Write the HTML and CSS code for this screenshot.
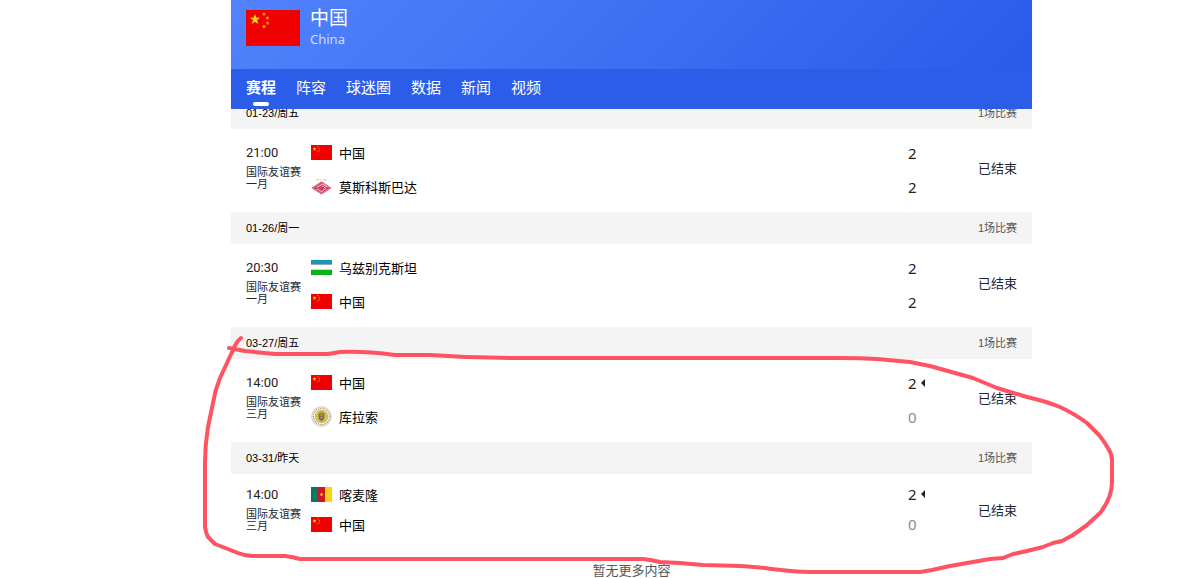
FILE: index.html
```html
<!DOCTYPE html>
<html lang="zh-CN">
<head>
    <meta charset="UTF-8">
    <meta name="viewport" content="width=device-width, initial-scale=1.0">
    <title>中国 - 赛程</title>
    <link rel="stylesheet" href="styles.css">
</head>
<body>
    <!-- shared flag and badge artwork -->
    <svg class="sprite" width="0" height="0" aria-hidden="true">
        <symbol id="flag-cn" viewBox="0 0 54 36" preserveAspectRatio="none">
            <rect width="54" height="36" fill="#f10000"/>
            <path d="M9 4l1.300 3.600 3.900.1-3.100 2.400 1.100 3.800L9 11.700l-3.200 2.200 1.100-3.800-3.100-2.400 3.900-.1z" fill="#ffd800"/>
            <path d="M18 2l.6 1.200 1.300.2-1 .9.300 1.400-1.200-.7-1.200.7.300-1.400-1-.9 1.300-.2z" fill="#f5b400"/>
            <path d="M21.500 6l.6 1.200 1.300.2-1 .9.300 1.400-1.200-.7-1.200.7.300-1.400-1-.9 1.300-.2z" fill="#f5b400"/>
            <path d="M21.500 11l.6 1.200 1.300.2-1 .9.300 1.400-1.200-.7-1.200.7.300-1.400-1-.9 1.300-.2z" fill="#f5b400"/>
            <path d="M18 14.500l.6 1.200 1.300.2-1 .9.300 1.400-1.200-.7-1.200.7.300-1.400-1-.9 1.300-.2z" fill="#f5b400"/>
        </symbol>
        <symbol id="flag-uz" viewBox="0 0 21 15" preserveAspectRatio="none">
            <rect width="21" height="15" fill="#fff"/>
            <rect width="21" height="4" fill="#159bb9"/>
            <rect y="4" width="21" height="1" fill="#8fa9b1"/>
            <rect y="9" width="21" height="1" fill="#b5e5b8"/>
            <rect y="10" width="21" height="5" fill="#08b312"/>
        </symbol>
        <symbol id="flag-cm" viewBox="0 0 21 14" preserveAspectRatio="none">
            <rect width="7" height="14" fill="#057a5e"/>
            <rect x="7" width="7" height="14" fill="#ce1529"/>
            <rect x="14" width="7" height="14" fill="#fcd116"/>
            <path d="M10.500 5l.6 1.400h1.400l-1.100.9.400 1.400-1.300-.8-1.300.8.400-1.400-1.100-.9h1.400z" fill="#fcc516"/>
        </symbol>
        <symbol id="badge-spartak" viewBox="0 0 22 22">
            <path d="M6 4h2M9 4h1M12 4h1M14 4h2" stroke="#d8ccae" stroke-width="1.500"/>
            <path d="M11 5.500L21.500 12.500 11 19.500.5 12.500z" fill="#d43f60"/>
            <path d="M2 12.500L11 6.500l9 6-9 6z" fill="none" stroke="#f0b7c3" stroke-width=".5"/>
            <path d="M6 12l6-3.500 5 3M6 14.500l5.500-4 4 2.500-4.500 3.500-3-2" fill="none" stroke="#fbe9ed" stroke-width=".9"/>
            <path d="M7 13l4-2 3 2" fill="none" stroke="#b71d3e"/>
        </symbol>
        <symbol id="badge-curacao" viewBox="0 0 22 22">
            <circle cx="11" cy="11" r="10.300" fill="#f6f5f7" stroke="#dfca8e"/>
            <circle cx="11" cy="11" r="8.500" fill="none" stroke="#8d91b5" stroke-width="1.400" stroke-dasharray="1 1"/>
            <circle cx="11" cy="11" r="7" fill="#d8be4c"/>
            <path d="M8 7.500h6v4c0 2.500-1.500 3.500-3 4.500-1.500-1-3-2-3-4.500z" fill="#777052"/>
            <path d="M8.500 7.500l1-2 1.500 1 1.500-1 1 2z" fill="#b89a28"/>
            <path d="M9.500 9.500h3M9.500 12h3" stroke="#c3a94c"/>
        </symbol>
    </svg>

    <div class="page">
        <header class="team-header">
            <div class="team-info">
                <svg class="team-flag" role="img" aria-label="中国"><use href="#flag-cn"/></svg>
                <div>
                    <h1>中国</h1>
                    <p>China</p>
                </div>
            </div>
            <nav class="tabs">
                <a class="active" href="#schedule">赛程</a>
                <a href="#squad">阵容</a>
                <a href="#fans">球迷圈</a>
                <a href="#stats">数据</a>
                <a href="#news">新闻</a>
                <a href="#video">视频</a>
            </nav>
        </header>

        <main class="schedule" id="schedule">
            <div class="date-bar">
                <h2>01-23/周五</h2>
                <span>1场比赛</span>
            </div>
            <div class="match">
                <div class="match-info">
                    <time>21:00</time>
                    <p>国际友谊赛<br>一月</p>
                </div>
                <div class="teams">
                    <div class="team">
                        <svg class="flag"><use href="#flag-cn"/></svg>
                        <span class="name">中国</span>
                        <span class="score">2</span>
                    </div>
                    <div class="team">
                        <svg class="badge"><use href="#badge-spartak"/></svg>
                        <span class="name">莫斯科斯巴达</span>
                        <span class="score">2</span>
                    </div>
                </div>
                <div class="status">已结束</div>
            </div>

            <div class="date-bar">
                <h2>01-26/周一</h2>
                <span>1场比赛</span>
            </div>
            <div class="match">
                <div class="match-info">
                    <time>20:30</time>
                    <p>国际友谊赛<br>一月</p>
                </div>
                <div class="teams">
                    <div class="team">
                        <svg class="flag"><use href="#flag-uz"/></svg>
                        <span class="name">乌兹别克斯坦</span>
                        <span class="score">2</span>
                    </div>
                    <div class="team">
                        <svg class="flag"><use href="#flag-cn"/></svg>
                        <span class="name">中国</span>
                        <span class="score">2</span>
                    </div>
                </div>
                <div class="status">已结束</div>
            </div>

            <div class="date-bar">
                <h2>03-27/周五</h2>
                <span>1场比赛</span>
            </div>
            <div class="match">
                <div class="match-info">
                    <time>14:00</time>
                    <p>国际友谊赛<br>三月</p>
                </div>
                <div class="teams">
                    <div class="team">
                        <svg class="flag"><use href="#flag-cn"/></svg>
                        <span class="name">中国</span>
                        <span class="score winner">2</span>
                    </div>
                    <div class="team">
                        <svg class="badge"><use href="#badge-curacao"/></svg>
                        <span class="name">库拉索</span>
                        <span class="score loser">0</span>
                    </div>
                </div>
                <div class="status">已结束</div>
            </div>

            <div class="date-bar">
                <h2>03-31/昨天</h2>
                <span>1场比赛</span>
            </div>
            <div class="match compact">
                <div class="match-info">
                    <time>14:00</time>
                    <p>国际友谊赛<br>三月</p>
                </div>
                <div class="teams">
                    <div class="team">
                        <svg class="flag"><use href="#flag-cm"/></svg>
                        <span class="name">喀麦隆</span>
                        <span class="score winner">2</span>
                    </div>
                    <div class="team">
                        <svg class="flag"><use href="#flag-cn"/></svg>
                        <span class="name">中国</span>
                        <span class="score loser">0</span>
                    </div>
                </div>
                <div class="status">已结束</div>
            </div>
        </main>

        <footer class="no-more">暂无更多内容</footer>
    </div>

    <!-- hand-drawn marker line around the last two matches -->
    <svg class="marker" width="1202" height="578" viewBox="0 0 1202 578" aria-hidden="true">
        <path d="M241 338Q236 342 233 350L220 378Q215 390 213 403L208 427Q205 445 205 463V527Q206 533 208 537L215 544 238 553Q245 556 253 556H285Q293 557 300 559H643Q652 560 660 562L680 563 703 565 740 566C765 567 785 572 810 572H920L932 570 950 566 990 559 1003 558 1013 554 1027 551 1043 547 1053 543 1062 541 1073 535 1087 525 1100 513Q1112 498 1112 482V460Q1112 454 1108 448 1104 441 1099 435L1087 423Q1075 414 1060 407 1045 401 1027 397L997 388 973 378 930 366 910 362 877 359Q860 358 840 358H510Q470 358 430 355H395Q365 351 340 352L328 354H275L245 351 229 348"/>
    </svg>
</body>
</html>
```
FILE: styles.css
```css
* {
    margin: 0;
    padding: 0;
    box-sizing: border-box;
}

body {
    position: relative;
    padding: 0 170px 0 231px;
    font-family: "Liberation Sans", "Noto Sans CJK SC", sans-serif;
    font-size: 13px;
    color: #000;
    background-color: #fff;
}

.sprite {
    position: absolute;
}

/* team header */
.team-header {
    position: relative;
    z-index: 1;
    color: #fff;
    background: linear-gradient(135deg, #5183fd, #2859e8);
}

.team-info {
    display: flex;
    gap: 10px;
    height: 69px;
    padding: 5px 15px;
    font-family: "Noto Sans", "Noto Sans CJK SC", sans-serif;
}

.team-flag {
    width: 54px;
    height: 36px;
    margin-top: 5px;
}

.team-info h1 {
    font-size: 19px;
    font-weight: 400;
    line-height: 26px;
}

.team-info p {
    font-size: 13px;
    line-height: 17px;
    color: #cfdcff;
}

.tabs {
    display: flex;
    gap: 20px;
    padding: 0 15px;
    background-color: #2b5de9;
}

.tabs a {
    display: flex;
    flex-direction: column;
    align-items: center;
    height: 40px;
    font-size: 15px;
    font-weight: 400;
    line-height: 37px;
    color: #fff;
    text-decoration: none;
}

.tabs .active {
    font-weight: 700;
}

.tabs .active::after {
    content: "";
    width: 16px;
    height: 4px;
    margin-top: -4px;
    border-radius: 2px;
    background-color: #fff;
}

/* match list, first row slides under the header */
.schedule {
    margin-top: -12px;
}

.date-bar {
    display: flex;
    justify-content: space-between;
    padding: 0 15px;
    font-size: 11px;
    line-height: 32px;
    background-color: #f4f4f4;
}

.date-bar h2 {
    font-size: 11px;
    font-weight: 400;
}

.date-bar span {
    color: #555;
}

.match {
    display: flex;
    align-items: center;
    height: 83px;
    padding: 0 15px 2px;
}

.match-info {
    width: 65px;
    padding-bottom: 6px;
}

.match-info time {
    display: block;
    font-family: Roboto, sans-serif;
    font-size: 13px;
    line-height: 20px;
    color: #222;
}

.match-info p {
    margin-top: 3px;
    font-size: 11px;
    line-height: 12px;
    color: #222633;
}

.teams {
    flex: 1;
}

.team {
    display: flex;
    align-items: center;
    height: 34px;
}

.compact {
    height: 76px;
}

.compact .teams {
    padding-bottom: 4px;
}

.compact .team {
    height: 30px;
}

.flag,
.badge {
    width: 21px;
    height: 15px;
    margin-right: 7px;
}

.badge {
    height: 21px;
}

.name {
    flex: 1;
}

.score {
    position: relative;
    width: 70px;
    font-family: "Noto Sans", sans-serif;
    font-size: 15px;
    line-height: 20px;
    color: #222;
}

.loser {
    color: #858b96;
}

.winner::after {
    content: "";
    position: absolute;
    top: 6px;
    left: 13px;
    border: 4px solid transparent;
    border-right-color: #222;
    border-left: 0;
}

.status {
    padding-bottom: 4px;
    color: #222633;
}

.no-more {
    padding-top: 13px;
    line-height: 15px;
    text-align: center;
    color: #555;
}

.marker {
    position: absolute;
    top: 0;
    left: 0;
    pointer-events: none;
}

.marker path {
    fill: none;
    stroke: #ff5364;
    stroke-width: 4;
    stroke-linecap: round;
    stroke-linejoin: round;
}
```
